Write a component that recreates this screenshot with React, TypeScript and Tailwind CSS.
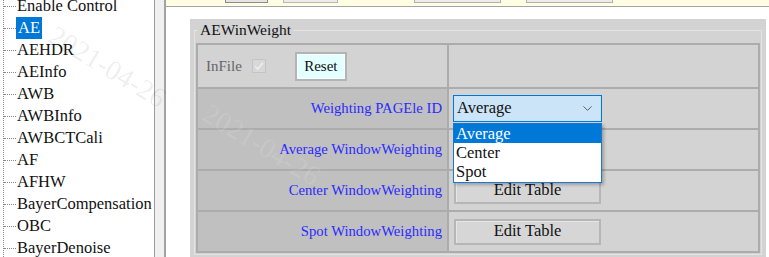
import { ChevronDown } from "lucide-react";

const treeItems = [
  "Enable Control",
  "AE",
  "AEHDR",
  "AEInfo",
  "AWB",
  "AWBInfo",
  "AWBCTCali",
  "AF",
  "AFHW",
  "BayerCompensation",
  "OBC",
  "BayerDenoise",
];

function TreePanel() {
  return (
    <div className="h-full w-[155px] shrink-0 overflow-hidden border-r border-[#9c9c9c] bg-white">
      <ul className="-mt-[5px] ml-[3px] border-l border-dotted border-[#8a8a8a]">
        {treeItems.map((item) => (
          <li key={item} className="flex h-[22px] items-center">
            <span className="w-[12px] shrink-0 border-t border-dotted border-[#8a8a8a]" />
            <span
              className={
                item === "AE"
                  ? "flex h-[22px] items-center bg-[#0078d7] px-[2px] text-[16.5px] text-white"
                  : "whitespace-nowrap pl-[1px] text-[16.5px] text-[#111]"
              }
            >
              {item}
            </span>
          </li>
        ))}
      </ul>
    </div>
  );
}

function TopBar() {
  return (
    <div className="flex h-[7px] shrink-0 items-start border-b border-[#a4a4a4] bg-[#fffde3]">
      <div className="ml-[59px] h-[3px] w-[43px] border border-t-0 border-[#8c8c8c] bg-[#e4e4e4]" />
      <div className="ml-[15px] h-[3px] w-[55px] border border-t-0 border-[#b8b8b8] bg-[#ececec]" />
      <div className="ml-[76px] h-[3px] w-[87px] border border-t-0 border-[#b0b0b0] bg-[#ececec]" />
      <div className="ml-[25px] h-[3px] w-[87px] border border-t-0 border-[#b0b0b0] bg-[#ececec]" />
    </div>
  );
}

function EditButton() {
  return (
    <button className="flex h-[26px] w-[147px] items-center justify-center border-2 border-[#b6b6b6] bg-[#d6d6d6] text-[16.5px] text-[#111] shadow-[inset_1px_1px_0_#e6e6e6]">
      Edit Table
    </button>
  );
}

function LabelCell({ children }: { children: React.ReactNode }) {
  return (
    <td className="w-[251px] border-2 border-[#acacac] bg-[#c0c0c0] pr-[5px] text-right text-[14.7px] text-[#2a2aff]">
      {children}
    </td>
  );
}

function WinWeightPanel() {
  return (
    <div className="ml-[24px] mr-[3px] mt-[12px] bg-[#d3d3d3] px-[4px] pb-[3px] pt-[2px]">
      <fieldset className="border border-[#e3e3e3] px-[1px] pb-[1px]">
        <legend className="ml-[2px] px-[2px] text-[15.5px] leading-[18px] text-[#111]">
          AEWinWeight
        </legend>
        <table className="mt-[4px] w-full border-collapse border-2 border-[#acacac]">
          <tbody>
            <tr className="h-[44px]">
              <td className="w-[251px] border-2 border-[#acacac] bg-[#d3d3d3]">
                <div className="flex items-center pl-[8px]">
                  <span className="text-[15px] text-[#666]">InFile</span>
                  <span className="ml-[10px] flex h-[14px] w-[14px] items-center justify-center border border-[#c4c4c4] bg-[#d8d8d8]">
                    <svg viewBox="0 0 14 14" className="h-[14px] w-[14px]">
                      <path
                        d="M2.5 7.5 L5.5 10.5 L11.5 3.5"
                        fill="none"
                        stroke="#f2f2f2"
                        strokeWidth="1.4"
                      />
                    </svg>
                  </span>
                  <button className="ml-[29px] flex h-[29px] w-[52px] items-center justify-center border-2 border-[#b4b4b4] bg-[#e3ffff] text-[15px] text-[#111] shadow-[inset_0_0_0_1px_#f4ffff]">
                    Reset
                  </button>
                </div>
              </td>
              <td className="border-2 border-[#acacac] bg-[#d3d3d3]" />
            </tr>
            <tr className="h-[41px]">
              <LabelCell>Weighting PAGEle ID</LabelCell>
              <td className="relative border-2 border-[#acacac] bg-[#d3d3d3] pl-[4px]">
                <div className="relative w-[149px]">
                  <div className="flex h-[27px] items-center justify-between border border-[#0078d7] bg-[#cce4f7] pl-[3px] pr-[6px] text-[16.5px] text-[#111]">
                    <span>Average</span>
                    <ChevronDown className="h-[15px] w-[15px] text-[#555]" strokeWidth={1.5} />
                  </div>
                  <div className="absolute left-0 top-[28px] z-10 w-[149px] border border-[#1a78d2] bg-white text-[16.5px] leading-[19px] shadow-[2px_2px_3px_rgba(0,0,0,0.25)]">
                    <div className="bg-[#0078d7] pl-[2px] text-white">Average</div>
                    <div className="pl-[2px] text-[#111]">Center</div>
                    <div className="pl-[2px] pb-[1px] text-[#111]">Spot</div>
                  </div>
                </div>
              </td>
            </tr>
            <tr className="h-[41px]">
              <LabelCell>Average WindowWeighting</LabelCell>
              <td className="border-2 border-[#acacac] bg-[#d3d3d3]" />
            </tr>
            <tr className="h-[41px]">
              <LabelCell>Center WindowWeighting</LabelCell>
              <td className="border-2 border-[#acacac] bg-[#d3d3d3] pl-[5px]">
                <EditButton />
              </td>
            </tr>
            <tr className="h-[41px]">
              <LabelCell>Spot WindowWeighting</LabelCell>
              <td className="border-2 border-[#acacac] bg-[#d3d3d3] pl-[5px]">
                <EditButton />
              </td>
            </tr>
          </tbody>
        </table>
      </fieldset>
    </div>
  );
}

export default function App() {
  return (
    <div className="relative flex h-[257px] w-[769px] overflow-hidden bg-white [font-family:'Liberation_Serif','Times_New_Roman',serif]">
      <TreePanel />
      <div className="h-full w-[11px] shrink-0 border-r-2 border-[#a2a2a2] bg-[#f0f0f0]" />
      <div className="flex min-w-0 flex-1 flex-col">
        <TopBar />
        <WinWeightPanel />
      </div>

      {/* watermark */}
      <span className="pointer-events-none absolute left-[42px] top-[46px] rotate-[31deg] whitespace-nowrap text-[28px] text-black/[0.08]">
        2021-04-26
      </span>
      <span className="pointer-events-none absolute left-[196px] top-[124px] rotate-[31deg] whitespace-nowrap text-[28px] text-white/[0.12]">
        2021-04-26
      </span>
    </div>
  );
}
